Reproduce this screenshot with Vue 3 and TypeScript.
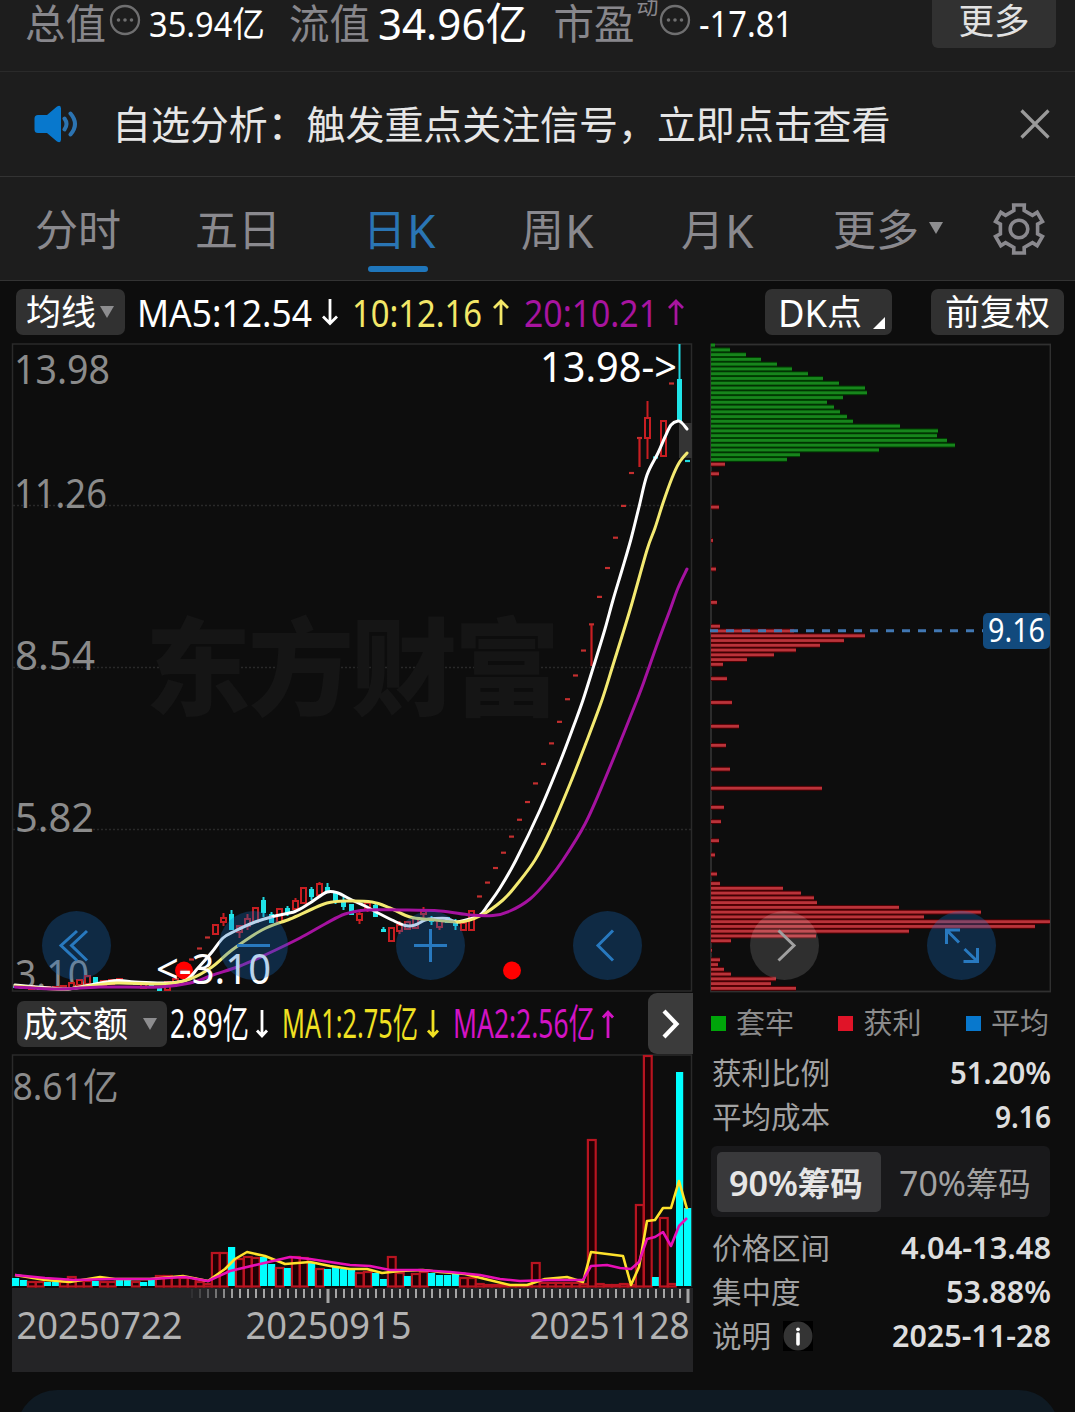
<script setup lang="ts">
import { h, type FunctionalComponent } from 'vue'

/* One run of text set to an exact advance width */
const Fit: FunctionalComponent<{ t: string; w: number; s: number; weight?: number }> = (p) =>
  h('svg', { width: p.w, height: p.s * 1.2, style: { overflow: 'visible', display: 'block', flex: 'none' } }, [
    h('text', {
      x: 0, y: p.s * 0.957, textLength: p.w, lengthAdjust: 'spacingAndGlyphs',
      'font-size': p.s, 'font-weight': p.weight ?? 400, fill: 'currentColor',
    }, p.t),
  ])
Fit.props = ['t', 'w', 's', 'weight']

const tabs = [
  { cjk: '分时', k: '' }, { cjk: '五日', k: '' }, { cjk: '日', k: 'K', on: true },
  { cjk: '周', k: 'K' }, { cjk: '月', k: 'K' },
]

const cx = (i: number) => 15.5 + 8 * i
type Candle = { x: number; up: boolean; top: number; bottom: number; high: number; low: number }
const c = (i: number, up: boolean, top: number, bottom: number, high = top, low = bottom): Candle =>
  ({ x: cx(i), up, top, bottom, high, low })

const candles: Candle[] = [
  c(0, false, 986, 988), c(1, false, 987, 989), c(2, true, 986, 989), c(3, false, 988, 990), c(4, true, 987, 989),
  c(5, true, 987, 989), c(6, true, 986, 989), c(7, true, 983, 988), c(8, true, 980, 985), c(9, true, 976, 984),
  c(10, false, 977, 983), c(11, true, 981, 985), c(12, true, 980, 984), c(13, true, 979, 982), c(14, false, 981, 983),
  c(15, false, 982, 985), c(16, true, 984, 988), c(17, false, 985, 988), c(18, false, 988, 991), c(19, true, 982, 990),
  c(20, true, 979, 983), c(21, true, 970, 973),
  c(25, true, 925, 934), c(26, true, 918, 922, 913, 926), c(27, false, 914, 930, 910), c(28, true, 926, 932, 925, 938),
  c(29, true, 919, 926, 914, 930), c(30, true, 908, 922), c(31, false, 900, 913, 897, 917), c(32, false, 914, 923, 912),
  c(33, true, 909, 922), c(34, false, 908, 914, 906, 916), c(35, true, 901, 909, 898), c(36, true, 888, 903),
  c(37, false, 889, 897, 887, 900), c(38, true, 884, 895, 882), c(39, false, 887, 891, 883, 893),
  c(40, false, 893, 902, 891, 904), c(41, false, 901, 907, 897, 910), c(42, false, 904, 915), c(43, true, 914, 920, 911, 924),
  c(44, true, 903, 909, 902, 912), c(45, false, 905, 917, 903), c(46, false, 929, 932, 927), c(47, true, 928, 941),
  c(48, true, 925, 931, 921, 934), c(49, true, 922, 929), c(50, true, 918, 928), c(51, true, 911, 914, 907, 918),
  c(52, false, 918, 922, 916, 925), c(53, true, 921, 927, 920, 930), c(54, false, 917, 923), c(55, false, 922, 926, 919, 930),
  c(56, true, 923, 930), c(57, true, 911, 930),
  c(79, true, 418, 438, 401, 459), c(81, true, 421, 456), c(83, false, 379, 421, 344),
]

/* Limit-up days: open, high, low and close are one price */
const dashes: { x: number; y: number; up: boolean }[] = [
  { x: 191.5, y: 959.5, up: true }, { x: 199.5, y: 948.5, up: true }, { x: 207.5, y: 937.5, up: true },
  { x: 631.5, y: 473, up: true }, { x: 639.5, y: 438, up: true }, { x: 671.5, y: 383.5, up: true },
  { x: 655.5, y: 457.5, up: false }, { x: 687.5, y: 461, up: false },
]
for (let k = 0; k <= 18; k++) dashes.push({ x: 623.5 - 8 * k, y: 990 - (11.25 / 1.05 ** k - 3.1) * 59.4, up: true })

type Pt = [number, number]
const smooth = (p: Pt[]) => {
  let d = `M${p[0][0]} ${p[0][1]}`
  for (let i = 0; i < p.length - 1; i++) {
    const a = p[i - 1] ?? p[i], b = p[i], e = p[i + 1], f = p[i + 2] ?? e
    d += `C${b[0] + (e[0] - a[0]) / 6} ${b[1] + (e[1] - a[1]) / 6} ${e[0] - (f[0] - b[0]) / 6} ${e[1] - (f[1] - b[1]) / 6} ${e[0]} ${e[1]}`
  }
  return d
}
const line = (p: Pt[]) => 'M' + p.map((q) => q.join(' ')).join('L')

const ma5 = smooth([[15, 985], [50, 988], [68, 989], [90, 985], [117, 980.5], [135, 982], [165, 983], [186, 980], [198, 968], [212, 952], [223, 938], [235, 931], [255, 922], [275, 916], [295, 911.5], [310, 903], [327, 892], [338, 893], [350, 899], [365, 906], [380, 914], [392, 920], [405, 925.5], [415, 925], [425, 920], [435, 918.5], [447, 918.5], [456, 922], [466, 920], [480, 915], [488, 905], [500, 888], [516, 860], [540, 810], [560, 762], [574, 725], [583, 700], [594, 665], [605, 629], [613, 600], [622, 570], [631, 539], [639, 507], [647, 475], [658, 453], [665, 437], [671, 425], [678, 421], [682, 423], [687, 429]])
const ma10 = smooth([[15, 986], [60, 989], [90, 986], [117, 983], [165, 984], [190, 979], [212, 967], [232, 950], [262, 930], [290, 919], [310, 910], [327, 903], [345, 901], [372, 902], [390, 908], [410, 917], [430, 919.5], [460, 922], [480, 916], [503, 900], [518, 883], [535, 860], [550, 831], [570, 784], [586, 743], [602, 700], [613, 665], [630, 610], [647, 550], [655, 528], [663, 503], [672, 478], [679, 463], [687, 453]])
const ma20 = smooth([[15, 987], [60, 989], [100, 987], [160, 987], [190, 983], [213, 975], [240, 966], [265, 955], [300, 938], [325, 924], [345, 914], [367, 910], [400, 910], [440, 911], [470, 915], [493, 915.5], [510, 911], [530, 899], [548, 880], [563, 860], [585, 824], [605, 779], [637, 700], [647, 673], [658, 642], [670, 610], [678, 588], [687, 569]])

const vol: [number, boolean][] = [
  [1278, false], [1280, false], [1281, true], [1281, true], [1282, false], [1282, false], [1281, true], [1276, true], [1280, true],
  [1280, true], [1281, false], [1281, true], [1281, true], [1280, false], [1280, false], [1281, true], [1282, false], [1280, false],
  [1275, true], [1275, true], [1276, true], [1277, true], [1277, true], [1281, true], [1283, true], [1252, true], [1252, true],
  [1247, false], [1258, true], [1256, true], [1257, true], [1257, false], [1264, false], [1267, true], [1268, false], [1256, true],
  [1257, true], [1263, false], [1268, true], [1269, false], [1266, false], [1269, false], [1270, false], [1272, true], [1271, true],
  [1273, false], [1279, false], [1256, true], [1272, true], [1276, false], [1273, true], [1271, true], [1273, false], [1275, false],
  [1275, false], [1273, false], [1277, true], [1277, true], [1283, true], [1284, true], [1284, true], [1284, true], [1284, true],
  [1284, true], [1284, true], [1262, true], [1282, true], [1282, true], [1282, true], [1282, true], [1282, true], [1283, true],
  [1139, true], [1283, true], [1284, true], [1284, true], [1283, true], [1284, true], [1204, true], [1055, true], [1277, false],
  [1217, true], [1283, true], [1072, false], [1208, false],
]
const vma1 = line([[15, 1275], [45, 1280], [70, 1282], [100, 1277], [115, 1279], [150, 1279], [183, 1276], [208, 1281], [225, 1269], [235, 1259], [247, 1252], [265, 1256], [285, 1264], [310, 1262], [330, 1266], [350, 1269], [367, 1269], [382, 1273], [400, 1271], [423, 1270], [440, 1272], [465, 1274], [485, 1279], [510, 1285], [527, 1285], [545, 1279], [567, 1277], [583, 1282], [591, 1252], [615, 1255], [623, 1256], [631, 1285], [639, 1267], [647, 1221], [655, 1220], [663, 1208], [671, 1208], [679, 1181], [687, 1209]])
const vma2 = line([[15, 1275], [45, 1278], [75, 1280], [110, 1279], [150, 1279], [185, 1277], [208, 1281], [230, 1271], [260, 1264], [290, 1257], [310, 1259], [330, 1262], [350, 1265], [370, 1266], [390, 1270], [420, 1270], [450, 1272], [480, 1275], [500, 1279], [520, 1281], [550, 1280], [583, 1280], [591, 1266], [607, 1265], [620, 1268], [631, 1269], [639, 1262], [647, 1239], [655, 1237], [663, 1232], [671, 1246], [679, 1226], [687, 1218]])

const ticks = Array.from({ length: 63 }, (_, n) => ({
  x: 191.5 + 8 * n,
  o: Math.min(1, 0.1 + n * 0.17),
  big: n === 17 || n === 62,
}))

/* Chip distribution: row index and bar length in pixels */
const greens = [4, 19, 35, 50, 66, 81, 97, 112, 128, 154, 156, 132, 116, 123, 129, 136, 142, 189, 227, 226, 236, 244, 168, 89, 76]
const reds: [number, number][] = [[25, 14], [27, 8], [34, 8], [41, 2], [47, 5], [54, 6], [59, 9], [60, 83], [61, 154], [62, 133], [63, 109], [64, 85], [65, 63], [66, 36], [67, 12], [70, 16], [75, 21], [80, 28], [84, 15], [89, 19], [93, 111], [97, 13], [100, 10], [104, 8], [107, 4], [111, 6], [113, 9], [114, 72], [115, 90], [116, 103], [117, 106], [118, 188], [119, 270], [120, 213], [121, 339], [122, 324], [123, 198], [124, 105], [125, 20], [127, 1], [129, 9], [130, 7], [131, 13], [132, 20], [133, 65], [134, 60], [135, 85]]
const bars = [
  ...greens.map((w, k) => ({ k, w, up: false })),
  ...reds.map(([k, w]) => ({ k, w, up: true })),
].map((b) => ({ ...b, y: 345.1 + 4.765 * b.k }))

const legend = [{ t: '套牢', c: 'g' }, { t: '获利', c: 'r' }, { t: '平均', c: 'b' }]
const gear = (() => {
  const p: string[] = []
  for (let n = 0; n < 6; n++) {
    const a = n * 60
    for (const [r, d] of [[19.2, -15.5], [24.6, -12.5], [24.6, 12.5], [19.2, 15.5]]) {
      const t = ((a + d - 90) * Math.PI) / 180
      p.push(`${(27 + r * Math.cos(t)).toFixed(2)} ${(27 + r * Math.sin(t)).toFixed(2)}`)
    }
  }
  return 'M' + p.join('L') + 'Z'
})()
</script>

<template>
  <div class="app">
    <header class="quote">
      <span class="lab">总值</span>
      <svg class="dots" width="32" height="32" viewBox="0 0 32 32"><circle cx="16" cy="16" r="14" /><path d="M9.500 16h.01M16 16h.01M22.500 16h.01" /></svg>
      <Fit class="q1" t="35.94亿" :w="116" :s="35" />
      <span class="lab l2">流值</span>
      <Fit class="q2" t="34.96亿" :w="149.500" :s="44" />
      <span class="lab l3">市盈</span><span class="dyn">动</span>
      <svg class="dots" width="32" height="32" viewBox="0 0 32 32"><circle cx="16" cy="16" r="14" /><path d="M9.500 16h.01M16 16h.01M22.500 16h.01" /></svg>
      <Fit class="q3" t="-17.81" :w="94" :s="37" />
      <button class="more">更多</button>
    </header>

    <section class="notice">
      <svg width="48" height="40" viewBox="0 0 48 40">
        <path fill="#0878cd" d="M6 11h9L25 2.500q4-2 4 2v31q0 4-4 2L15 29H6q-3.500 0-3.500-3.500v-11Q2.500 11 6 11z" />
        <path fill="none" stroke="#2c74b2" stroke-width="4" stroke-linecap="round" d="M32.500 14.500q4 5.500 0 11M38.500 9.500q9 10.500 0 21" />
      </svg>
      <p>自选分析：触发重点关注信号，立即点击查看</p>
      <svg class="close" width="32" height="32" viewBox="0 0 32 32"><path d="M2.500 2.500 29.500 29.500M29.500 2.500 2.500 29.500" /></svg>
    </section>

    <nav class="tabs">
      <div v-for="t in tabs" :key="t.cjk" class="tab" :class="{ on: t.on }">{{ t.cjk }}<span v-if="t.k" class="k">{{ t.k }}</span></div>
      <div class="tab">更多<i class="tri"></i></div>
      <svg class="gear" width="54" height="54" viewBox="0 0 54 54"><path :d="gear" /><circle cx="27" cy="27" r="8.800" /></svg>
    </nav>

    <section class="tools">
      <button class="chip ma">均线<i class="tri"></i></button>
      <Fit class="m5 down" t="MA5:12.54" :w="175" :s="38" />
      <svg class="arr w" width="18" height="30" viewBox="0 0 18 30"><path d="M9 2v24M2 19.500 9 26.500l7-7" /></svg>
      <Fit class="m10 down" t="10:12.16" :w="130" :s="38" />
      <svg class="arr y" width="18" height="30" viewBox="0 0 18 30"><path d="M9 28V4M2 11 9 4l7 7" /></svg>
      <Fit class="m20 down" t="20:10.21" :w="134" :s="38" />
      <svg class="arr m" width="18" height="30" viewBox="0 0 18 30"><path d="M9 28V4M2 11 9 4l7 7" /></svg>
      <button class="chip dk"><Fit class="down" t="DK" :w="49" :s="38" />点<i class="corner"></i></button>
      <button class="chip adj">前复权</button>
    </section>

    <main class="body">
      <div class="left">
        <svg class="kline" width="693" height="651" viewBox="0 342 693 651">
          <rect x="12.500" y="344" width="679" height="647" fill="none" stroke="#2a2a2a" stroke-width="1.500" />
          <path d="M13 505.500H691M13 667.500H691M13 829.500H691" stroke="#292929" stroke-width="1.500" stroke-dasharray="2 2" />
          <text class="mark" x="145" y="707" textLength="415">东方财富</text>
          <g class="axis">
            <text x="14" y="384" textLength="96" lengthAdjust="spacingAndGlyphs">13.98</text>
            <text x="14" y="508" textLength="93" lengthAdjust="spacingAndGlyphs">11.26</text>
            <text x="15" y="670" textLength="80" lengthAdjust="spacingAndGlyphs">8.54</text>
            <text x="15" y="832" textLength="79" lengthAdjust="spacingAndGlyphs">5.82</text>
            <text x="15" y="989" textLength="74" lengthAdjust="spacingAndGlyphs">3.10</text>
          </g>
          <rect x="679" y="423" width="13" height="35" fill="#343434" />
          <circle cx="184" cy="970.500" r="9" fill="#f00" /><circle cx="512" cy="970.500" r="9" fill="#f00" />
          <g v-for="k in candles" :key="k.x" :class="k.up ? 'up' : 'down'">
            <path v-if="k.high < k.top" :d="`M${k.x} ${k.high}V${k.top}`" />
            <path v-if="k.low > k.bottom" :d="`M${k.x} ${k.bottom}V${k.low}`" />
            <rect :x="k.x - 2.500" :y="k.top" width="5" :height="k.bottom - k.top" />
          </g>
          <path v-for="d in dashes" :key="'d' + d.x" :d="`M${d.x - 2.500} ${d.y}h5`" :stroke="d.up ? '#c42f2f' : '#1fd9e0'" stroke-width="2.200" />
          <path d="M591.500 625v41M639.500 438v29" stroke="#c81e22" stroke-width="2.200" />
          <g class="curves"><path :d="ma5" stroke="#fff" /><path :d="ma10" stroke="#f4ea72" /><path :d="ma20" stroke="#a512a0" /></g>
          <g class="note">
            <text x="540" y="382" textLength="137" lengthAdjust="spacingAndGlyphs">13.98-&gt;</text>
            <text x="156" y="984" textLength="115" lengthAdjust="spacingAndGlyphs">&lt;-3.10</text>
          </g>
        </svg>

        <div class="volbar">
          <button class="chip amt">成交额<i class="tri"></i></button>
          <Fit class="v0" t="2.89亿" :w="79" :s="40" />
          <svg class="arr w" width="14" height="30" viewBox="0 0 14 30"><path d="M7 1v26M2 21.500 7 27l5-5.500" /></svg>
          <Fit class="v1" t="MA1:2.75亿" :w="136" :s="40" />
          <svg class="arr v1y" width="14" height="30" viewBox="0 0 14 30"><path d="M7 1v26M2 21.500 7 27l5-5.500" /></svg>
          <Fit class="v2" t="MA2:2.56亿" :w="142" :s="40" />
          <svg class="arr v2m" width="14" height="30" viewBox="0 0 14 30"><path d="M7 29V3M2 8.500 7 3l5 5.500" /></svg>
          <button class="next"><svg width="20" height="32" viewBox="0 0 20 32"><path d="M3 3 15.500 16 3 29" /></svg></button>
        </div>

        <svg class="volume" width="693" height="318" viewBox="0 1054 693 318">
          <path d="M12.500 1287V1055H691.500V1287" fill="none" stroke="#2a2a2a" stroke-width="1.500" />
          <rect x="12" y="1288" width="681" height="84" fill="#242426" />
          <text class="vl" x="12.500" y="1100" textLength="106" lengthAdjust="spacingAndGlyphs">8.61亿</text>
          <template v-for="(v, i) in vol" :key="i">
            <rect v-if="v[1]" :x="cx(i) - 3.600" :y="v[0] + 1" width="7.800" :height="1285.500 - v[0]" fill="#200003" stroke="#b81420" stroke-width="2.200" />
            <rect v-else :x="cx(i) - 3.500" :y="v[0]" width="7.200" :height="1286 - v[0]" fill="#0ff" />
          </template>
          <g class="vcurves"><path :d="vma1" stroke="#ffe22c" /><path :d="vma2" stroke="#e80fb6" /></g>
          <path v-for="t in ticks" :key="t.x" :d="`M${t.x + .5} 1289v${t.big ? 14 : 9}`" :stroke-width="t.big ? 3 : 2" stroke="#a5a5a5" :opacity="t.o" />
          <g class="dates">
            <text x="16.500" y="1339" textLength="166" lengthAdjust="spacingAndGlyphs">20250722</text>
            <text x="245.500" y="1339" textLength="166" lengthAdjust="spacingAndGlyphs">20250915</text>
            <text x="529.500" y="1339" textLength="160" lengthAdjust="spacingAndGlyphs">20251128</text>
          </g>
        </svg>

        <div class="controls">
          <button><svg viewBox="0 0 69 69"><path d="M35 20 19 34.500 35 49.500M45 20 29.500 34.500 45 49.500" /></svg></button>
          <button><svg viewBox="0 0 69 69"><path d="M18 34.500h33" /></svg></button>
          <button><svg viewBox="0 0 69 69"><path d="M18 34.500h33M34.500 18v33" /></svg></button>
          <button><svg viewBox="0 0 69 69"><path d="M40 19.500 25 34.500 40 49.500" /></svg></button>
          <button class="grey"><svg viewBox="0 0 69 69"><path d="M28.500 19.500 44 34.500 28.500 49.500" /></svg></button>
          <button><svg viewBox="0 0 69 69"><path d="M33 19H19.500V33M20 19.500 32 31.500M36.500 50.500H50.500V37M50 50 37.500 38" /></svg></button>
        </div>
      </div>

      <aside class="right">
        <svg class="chips" width="341" height="650" viewBox="710 343 341 650">
          <rect x="711" y="344.500" width="339.500" height="647" fill="none" stroke="#303030" stroke-width="1.800" />
          <rect v-for="b in bars" :key="'s' + b.k" x="711" :y="b.y - 2.400" :width="b.w" height="4.800" :fill="b.up ? '#500004' : '#003e02'" />
          <rect v-for="b in bars" :key="b.k" x="711" :y="b.y - 1.400" :width="b.w" height="2.800" :fill="b.up ? '#ba333a' : '#17851c'" />
          <path d="M710 630.800H983" stroke="#4177b2" stroke-width="3" stroke-dasharray="8 8" />
          <rect x="983" y="613" width="67" height="36" rx="5" fill="#124a7d" />
          <text x="988" y="642" textLength="57" lengthAdjust="spacingAndGlyphs" font-size="32" fill="#fff">9.16</text>
        </svg>
        <div class="legend"><span v-for="l in legend" :key="l.t"><i :class="l.c"></i>{{ l.t }}</span></div>
        <div class="row r1"><span>获利比例</span><Fit t="51.20%" :w="101" :s="31" :weight="600" /></div>
        <div class="row"><span>平均成本</span><Fit t="9.16" :w="56" :s="31" :weight="600" /></div>
        <div class="seg">
          <button class="on"><Fit class="down" t="90%" :w="69" :s="35" :weight="600" />筹码</button>
          <button class="off"><Fit class="down" t="70%" :w="67" :s="35" />筹码</button>
        </div>
        <div class="row"><span>价格区间</span><Fit t="4.04-13.48" :w="150" :s="31" :weight="600" /></div>
        <div class="row"><span>集中度</span><Fit t="53.88%" :w="105" :s="31" :weight="600" /></div>
        <div class="row"><span>说明</span>
          <svg class="info" width="30" height="30" viewBox="0 0 30 30"><rect width="30" height="30" fill="#000" /><circle cx="15" cy="15" r="14.500" fill="#343434" /><path d="M15 13v10" stroke="#fff" stroke-width="3.600" stroke-linecap="round" /><circle cx="15" cy="8.300" r="1.900" fill="#fff" /></svg>
          <Fit t="2025-11-28" :w="159" :s="31" :weight="600" />
        </div>
      </aside>
    </main>
    <footer class="sheet"></footer>
  </div>
</template>

<style>
body { margin: 0; background: #0d0d0d; }
</style>

<style scoped>
.app { width: 1075px; height: 1412px; overflow: hidden; background: #0d0d0d; color: #fff; font-family: "Noto Sans", "Noto Sans CJK SC", sans-serif; display: flex; flex-direction: column; }
button { border: 0; padding: 0; margin: 0; font: inherit; color: inherit; box-sizing: border-box; }
svg { display: block; flex: none; }
.quote { height: 72px; flex: none; background: #1d1d1d; border-bottom: 1px solid #2a2a2a; display: flex; align-items: center; padding: 0 19px 23px 25px; box-sizing: border-box; }
.lab { font-size: 40.500px; line-height: 46px; width: 84px; color: #88878c; white-space: nowrap; }
.dots { fill: none; stroke: #6f6f70; stroke-width: 2.300; margin-top: -8px; }
.dots path { stroke-width: 3.600; stroke-linecap: round; }
.q1 { margin-left: 8px; }
.l2 { margin-left: 24px; width: 81px; }
.q2 { margin-left: 8px; }
.l3 { margin-left: 26px; width: 83px; }
.dyn { font-size: 22px; line-height: 24px; color: #88878c; margin-top: -38px; }
.q3 { margin-left: 8px; }
.more { width: 124px; height: 54px; margin: -6px 0 0 auto; border-radius: 6px; background: #313131; color: #e2e2e2; font-size: 35.500px; line-height: 50px; padding-bottom: 2px; }
.notice { height: 104px; flex: none; background: #1d1d1d; border-bottom: 1px solid #333; display: flex; align-items: center; padding: 0 24px 0 32px; }
.notice p { margin: 0 0 0 32px; font-size: 39px; line-height: 50px; letter-spacing: -.08px; color: #e6e6e6; white-space: nowrap; }
.close { margin-left: auto; stroke: #9a9a9a; stroke-width: 3.200; }
.tabs { height: 104px; box-sizing: border-box; flex: none; background: #1d1d1d; border-bottom: 1px solid #333; display: grid; grid-template-columns: 160px 168px 158px 160px 152px 158px 54px; padding-left: 35px; align-items: center; }
.tab { position: relative; font-size: 43px; line-height: 60px; color: #8a898e; white-space: nowrap; display: flex; align-items: center; padding-top: 3px; }
.tab .k { font-size: 46px; margin-left: 1px; }
.tab.on { color: #2a75b4; }
.tab.on::after { content: ""; position: absolute; left: 5px; bottom: -12px; width: 60px; height: 6px; border-radius: 3px; background: #1f76bb; }
.tri { width: 0; height: 0; border: 7.500px solid transparent; border-top: 12px solid #8d8d8f; border-bottom: 0; }
.tab .tri { margin: -5px 0 0 10px; }
.gear { fill: none; stroke: #8a898e; stroke-width: 3.600; margin-left: .5px; }
.tools { height: 61px; flex: none; display: flex; align-items: center; padding: 1px 11px 0 16px; box-sizing: border-box; }
.chip { height: 46px; border-radius: 7px; background: #313131; color: #fff; font-size: 35px; line-height: 48px; display: flex; align-items: center; flex: none; }
.down { margin-top: 3px; }
.ma { width: 109px; padding-left: 10px; }
.ma .tri { margin-left: 4px; }
.m5 { margin-left: 12px; }
.arr { fill: none; stroke-width: 2.800; }
.w { stroke: #fff; margin-left: 9px; }
.m10 { margin-left: 13px; color: #f3e768; }
.y { stroke: #f3e768; margin-left: 10px; }
.m20 { margin-left: 14px; color: #a8149f; }
.m { stroke: #a8149f; margin-left: 9px; }
.dk { width: 127px; margin-left: auto; padding-left: 13px; position: relative; }
.corner { position: absolute; right: 7px; bottom: 6px; border-left: 12px solid transparent; border-bottom: 12px solid #fff; }
.adj { width: 133px; margin-left: 39px; justify-content: center; }
.body { height: 1030px; flex: none; display: flex; }
.left { position: relative; width: 693px; flex: none; }
.axis text { font-size: 40px; fill: #8b8b8b; }
.note text { font-size: 41px; fill: #fff; }
.mark { font-size: 106px; font-weight: 900; fill: #151515; }
.up path { stroke: #c81e22; stroke-width: 2; }
.up rect { stroke: #c81e22; stroke-width: 2; fill: #0d0d0d; }
.down path { stroke: #1fd9e0; stroke-width: 2; }
.down rect { fill: #1fe4e8; }
.curves path { fill: none; stroke-width: 3; stroke-linecap: round; stroke-linejoin: round; }
.volbar { height: 61px; display: flex; align-items: center; padding-left: 17px; }
.amt { width: 150px; padding-left: 6px; }
.amt .tri { margin-left: 15px; }
.v0 { margin-left: 3px; }
.volbar .w { margin-left: 6px; }
.v1 { margin-left: 13px; color: #f0e022; }
.v1y { stroke: #f0e022; margin-left: 8px; }
.v2 { margin-left: 13px; color: #d213c4; }
.v2m { stroke: #d213c4; margin-left: 6px; }
.next { width: 45px; height: 61px; margin-left: auto; background: #3b3b3b; border-radius: 9px 0 0 9px; display: flex; align-items: center; justify-content: center; }
.next path { fill: none; stroke: #fff; stroke-width: 4.200; }
.vl { font-size: 38px; fill: #8b8b8b; }
.dates text { font-size: 39px; fill: #b2b2b2; }
.vcurves path { fill: none; stroke-width: 2.600; stroke-linejoin: round; }
.controls { position: absolute; left: 42px; top: 569px; display: flex; gap: 108px; z-index: 2; }
.controls button { width: 69px; height: 69px; border-radius: 50%; background: rgba(20, 110, 196, .3); flex: none; }
.controls svg { width: 69px; height: 69px; fill: none; stroke: #2879bf; stroke-width: 3; }
.controls .grey { background: rgba(255, 255, 255, .14); }
.controls .grey svg { stroke: #a0a0a0; }
.right { margin-left: 17px; width: 341px; }
.chips { margin-top: 1px; }
.legend { display: flex; justify-content: space-between; height: 60px; align-items: center; padding-right: 2px; margin-left: 1px; font-size: 29px; color: #8b8b8b; }
.legend span { display: flex; align-items: center; line-height: 40px; }
.legend i { width: 15px; height: 15px; margin-right: 10px; }
.g { background: #00a50a; }
.r { background: #e01428; }
.b { background: #0878cd; }
.row { height: 44px; display: flex; align-items: center; justify-content: space-between; font-size: 29.500px; line-height: 44px; color: #a2a2a2; margin-left: 2px; }
.row > svg:last-child { color: #dedede; }
.row span { white-space: nowrap; }
.r1 { margin-top: -2px; }
.info { margin: 0 auto 0 12px; }
.seg { height: 71px; margin: 7px 1px 9px 1px; background: #19191b; border-radius: 6px; display: flex; align-items: center; padding: 0 6px; box-sizing: border-box; font-size: 32.500px; color: #a2a2a2; }
.seg button { width: 163.500px; height: 60px; display: flex; align-items: center; justify-content: center; background: none; }
.seg .on { background: #39393b; border-radius: 5px; color: #e6e6e6; font-weight: 700; padding-right: 6px; }
.seg .off { padding-left: 5px; }
.sheet { flex: none; width: 1042px; height: 80px; margin: 18px 0 0 17px; border-radius: 48px; background: #0f1a23; }
</style>
